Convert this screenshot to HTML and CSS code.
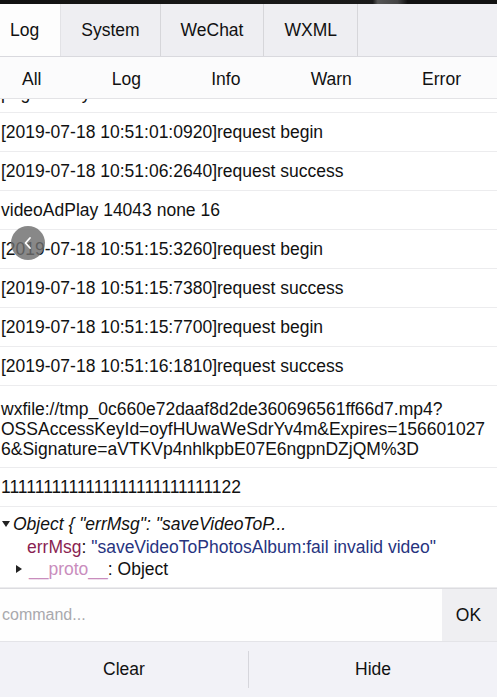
FILE: index.html
```html
<!DOCTYPE html>
<html>
<head>
<meta charset="utf-8">
<link rel="stylesheet" href="styles.css">
</head>
<body>
<div class="app">
  <div class="topstrip"></div>
  <div class="tabs">
    <div class="tab tab-first active">Log</div>
    <div class="tab">System</div>
    <div class="tab">WeChat</div>
    <div class="tab">WXML</div>
    <div class="tab-rest"></div>
  </div>
  <div class="filters">
    <span>All</span><span>Log</span><span>Info</span><span>Warn</span><span>Error</span>
  </div>
  <div class="logs">
    <div class="list">
      <div class="row">pageReady</div>
      <div class="row">[2019-07-18 10:51:01:0920]request begin</div>
      <div class="row">[2019-07-18 10:51:06:2640]request success</div>
      <div class="row">videoAdPlay 14043 none 16</div>
      <div class="row">[2019-07-18 10:51:15:3260]request begin</div>
      <div class="row">[2019-07-18 10:51:15:7380]request success</div>
      <div class="row">[2019-07-18 10:51:15:7700]request begin</div>
      <div class="row">[2019-07-18 10:51:16:1810]request success</div>
      <div class="row row-multi">wxfile://tmp_0c660e72daaf8d2de360696561ff66d7.mp4?<br>OSSAccessKeyId=oyfHUwaWeSdrYv4m&amp;Expires=156601027<br>6&amp;Signature=aVTKVp4nhlkpbE07E6ngpnDZjQM%3D</div>
      <div class="row">1111111111111111111111111122</div>
      <div class="row row-obj">
        <div class="obj-line"><span class="caret-down"></span><span class="obj-title">Object { "errMsg": "saveVideoToP...</span></div>
        <div class="obj-line obj-child"><span class="key">errMsg</span>: <span class="str">"saveVideoToPhotosAlbum:fail invalid video"</span></div>
        <div class="obj-line obj-proto"><span class="caret-right"></span><span class="proto">__proto__</span>: Object</div>
      </div>
    </div>
    <div class="back-btn">
      <svg width="12" height="14" viewBox="0 0 12 14"><path d="M8 2 L3.5 7 L8 12" fill="none" stroke="#fff" stroke-width="1.8" stroke-linecap="round" stroke-linejoin="round"/></svg>
    </div>
  </div>
  <div class="cmd">
    <div class="cmd-input">command...</div>
    <div class="cmd-ok">OK</div>
  </div>
  <div class="bottom">
    <div class="bottom-btn">Clear</div>
    <div class="bottom-sep"></div>
    <div class="bottom-btn">Hide</div>
  </div>
</div>
</body>
</html>
```

FILE: styles.css
```css
* { box-sizing: border-box; }
html, body { margin: 0; padding: 0; }
body {
  width: 497px;
  height: 697px;
  overflow: hidden;
  font-family: "Liberation Sans", Arial, sans-serif;
  font-size: 17.5px;
  color: #111;
  background: #fff;
}
.app {
  display: flex;
  flex-direction: column;
  height: 697px;
}
.topstrip {
  height: 4px;
  background: linear-gradient(90deg, #111 0%, #1a1a1a 75%, #555 76%, #444 80%, #111 82%, #111 100%);
  flex: none;
}
.tabs {
  display: flex;
  height: 53px;
  flex: none;
  border-bottom: 1px solid #d9d9de;
  background: #eeeef2;
}
.tab {
  padding: 0 20px;
  display: flex;
  align-items: center;
  border-right: 1px solid #d6d6da;
  background: #eeeef2;
}
.tab-first { padding-left: 10px; padding-right: 21px; }
.tab.active { background: #fdfdfd; border-right-color: #e2e2e6; }
.tab-rest { flex: 1; background: #efeff3; }
.filters {
  height: 42px;
  flex: none;
  display: flex;
  justify-content: space-between;
  align-items: center;
  padding: 3px 36px 0 22px;
  background: #fbfbfc;
  border-bottom: 1px solid #e3e3e6;
}
.logs {
  position: relative;
  flex: 1;
  min-height: 0;
  overflow: hidden;
  background: #fff;
}
.list { margin-top: -25px; }
.row {
  height: 39px;
  padding: 10px 0 0 1px;
  line-height: 19.5px;
  border-bottom: 1px solid #ececee;
  white-space: nowrap;
}
.row-multi { height: 82px; padding-top: 13px; line-height: 20px; }
.row-obj { height: 81px; padding-top: 6px; line-height: 22.5px; }
.obj-line { display: block; }
.caret-down {
  display: inline-block;
  vertical-align: middle;
  width: 0; height: 0;
  border-left: 4.5px solid transparent;
  border-right: 4.5px solid transparent;
  border-top: 6px solid #222;
  margin: 0 3px 2px 1px;
}
.obj-title { font-style: italic; }
.obj-child { padding-left: 26px; }
.obj-proto { padding-left: 15px; }
.caret-right {
  display: inline-block;
  vertical-align: middle;
  width: 0; height: 0;
  border-top: 4.5px solid transparent;
  border-bottom: 4.5px solid transparent;
  border-left: 6px solid #222;
  margin: 0 7px 2px 0;
}
.key { color: #8a1f52; }
.str { color: #27347f; }
.proto { color: #c98dbd; }
.back-btn {
  position: absolute;
  left: 11px;
  top: 127px;
  width: 34px;
  height: 34px;
  border-radius: 50%;
  background: rgba(110, 110, 110, 0.82);
  display: flex;
  align-items: center;
  justify-content: center;
}
.cmd {
  height: 54px;
  flex: none;
  display: flex;
  border-top: 1px solid #dcdce0;
  border-bottom: 1px solid #e4e4e8;
  background: #fff;
}
.cmd-input {
  flex: 1;
  display: flex;
  align-items: center;
  padding-left: 2px;
  color: #a9a9ad;
  font-size: 16px;
  background: #fefefe;
}
.cmd-ok {
  width: 55px;
  display: flex;
  align-items: center;
  justify-content: center;
  background: #efeff2;
  padding-right: 2px;
}
.bottom {
  height: 55px;
  flex: none;
  display: flex;
  align-items: center;
  background: #f2f2f7;
}
.bottom-btn {
  flex: 1;
  text-align: center;
}
.bottom-sep {
  width: 1px;
  height: 37px;
  background: #d6d6dc;
}
```
